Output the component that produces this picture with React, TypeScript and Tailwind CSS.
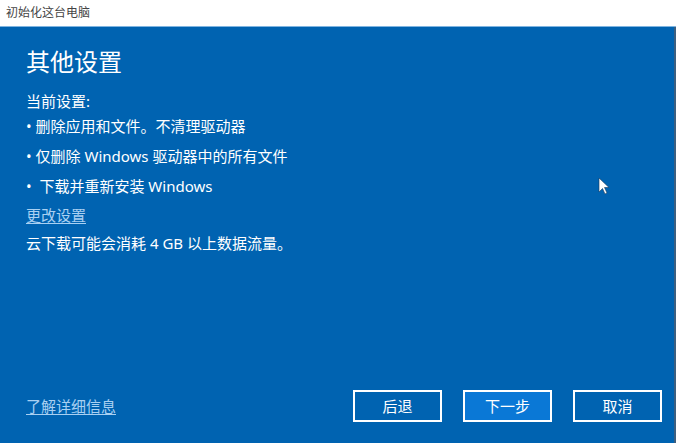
import React from 'react';

const font = { fontFamily: '"Noto Sans", "Noto Sans CJK SC", sans-serif' };

const settings = ['删除应用和文件。不清理驱动器', '仅删除 Windows 驱动器中的所有文件', ' 下载并重新安装 Windows'];

function DialogButton({ label, primary }: { label: string; primary?: boolean }) {
  return (
    <button
      className={
        'w-[89px] h-[32px] border-2 border-white text-white text-[15px] flex items-center justify-center ' +
        (primary ? 'bg-[#0a78d6]' : 'bg-[#0063b1]')
      }
    >
      {label}
    </button>
  );
}

export default function App() {
  return (
    <div className="relative w-[676px] h-[443px] flex flex-col overflow-hidden" style={font}>
      {/* window title bar */}
      <div className="h-[27px] bg-white flex items-center px-[6px] border-b border-[#7fb4e0]">
        <span className="text-[12px] text-[#444]">初始化这台电脑</span>
      </div>

      <div className="flex-1 bg-[#0063b1] border-r-2 border-[#3c5f80] flex flex-col px-[26px] pt-[19px] pb-[21px] text-white">
        <h1 className="text-[24px] leading-[32px] font-normal">其他设置</h1>

        <div className="mt-[13px] text-[15px] leading-[20px]">当前设置:</div>
        <ul className="mt-[5px] flex flex-col gap-[10px] text-[15px] leading-[20px]">
          {settings.map((s) => (
            <li key={s} className="whitespace-pre">
              • {s}
            </li>
          ))}
        </ul>

        <a className="mt-[9px] text-[15px] leading-[20px] text-[#a9d0f2] underline underline-offset-2 self-start">
          更改设置
        </a>
        <div className="mt-[8px] text-[15px] leading-[20px]">云下载可能会消耗 4 GB 以上数据流量。</div>

        <div className="mt-auto flex items-center justify-between">
          <a className="text-[15px] text-[#a9d0f2] underline underline-offset-2">了解详细信息</a>
          <div className="flex gap-[21px] mr-[-14px]">
            <DialogButton label="后退" />
            <DialogButton label="下一步" primary />
            <DialogButton label="取消" />
          </div>
        </div>
      </div>

      {/* mouse pointer */}
      <svg className="absolute left-[598px] top-[177px]" width="12" height="18" viewBox="0 0 12 18">
        <path d="M1 1 L1 15 L4.5 11.5 L7 17 L9 16 L6.5 10.5 L11 10.5 Z" fill="white" stroke="#1a3a5c" strokeWidth="0.6" />
      </svg>
    </div>
  );
}
